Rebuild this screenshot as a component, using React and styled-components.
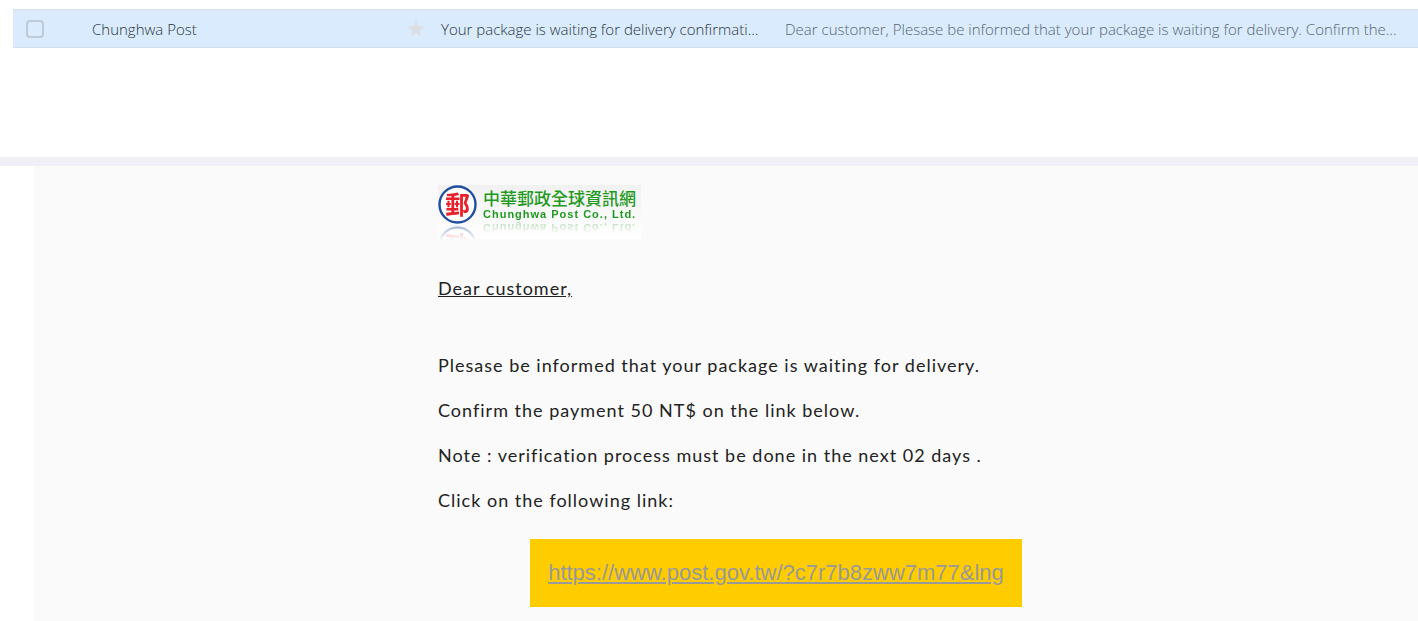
import React, { useState } from "react";
import styled, { createGlobalStyle } from "styled-components";

const paragraphs = [
	"Plesase be informed that your package is waiting for delivery.",
	"Confirm the payment 50 NT$ on the link below.",
	"Note : verification process must be done in the next 02 days .",
	"Click on the following link:",
];

function Emblem() {
	return (
		<EmblemSvg viewBox="0 0 40 40" aria-hidden="true">
			<circle cx="19.5" cy="19.5" r="18" fill="#fff" stroke="#1f4f9e" strokeWidth="2.4" />
			<text x="19.5" y="28.5" textAnchor="middle">
				郵
			</text>
		</EmblemSvg>
	);
}

function App() {
	const [checked, setChecked] = useState(false);

	return (
		<>
			<GlobalStyle />
			<MailRow>
				<Checkbox
					type="checkbox"
					aria-label="Select message"
					checked={checked}
					onChange={() => setChecked(!checked)}
				/>
				<Sender>Chunghwa Post</Sender>
				<StarButton type="button" aria-label="Star message">
					<svg viewBox="0 0 18 18" width="18" height="18">
						<path
							d="M9 0l2.2 6.1 6.3.3-5 4 1.7 6.1L9 13l-5.2 3.5 1.7-6.1-5-4 6.3-.3z"
							fill="#dcdfe2"
						/>
					</svg>
				</StarButton>
				<Subject>Your package is waiting for delivery confirmati...</Subject>
				<Preview>
					Dear customer, Plesase be informed that your package is waiting for
					delivery. Confirm the...
				</Preview>
			</MailRow>
			<Divider />
			<Message>
				<Content>
					<Logo>
						<Emblem />
						<BrandNames>
							<BrandChinese>中華郵政全球資訊網</BrandChinese>
							<BrandEnglish>Chunghwa Post Co., Ltd.</BrandEnglish>
						</BrandNames>
					</Logo>
					<Greeting>Dear customer,</Greeting>
					{paragraphs.map((text) => (
						<Paragraph key={text}>{text}</Paragraph>
					))}
					<LinkBox>
						<a href="#/">https://www.post.gov.tw/?c7r7b8zww7m77&amp;lng</a>
					</LinkBox>
				</Content>
			</Message>
		</>
	);
}

export default App;

const GlobalStyle = createGlobalStyle`
	* {
		box-sizing: border-box;
	}

	body {
		margin: 0;
		background: #fff;
	}
`;

const MailRow = styled.div`
	display: grid;
	grid-template-columns: 66px 315px 34px 344px 1fr;
	align-items: center;
	height: 39px;
	margin: 9px 0 109px 13px;
	padding-left: 13px;
	background: #d9ebfc;
	border-top: 1px solid #d3e0ec;
	border-bottom: 1px solid #d3e0ec;
	font-family: "Open Sans", "Noto Sans", sans-serif;
	font-size: 15px;
	font-weight: 350;
	white-space: nowrap;
`;

const Checkbox = styled.input`
	appearance: none;
	width: 18px;
	height: 18px;
	margin: 0;
	border: 2px solid #bfcad6;
	border-radius: 4px;
`;

const Sender = styled.span`
	color: #2b3642;
`;

const StarButton = styled.button`
	display: flex;
	padding: 0;
	border: 0;
	background: none;
`;

const Subject = styled.span`
	color: #2b3642;
`;

const Preview = styled.span`
	color: #586572;
`;

const Divider = styled.div`
	height: 9px;
	background: #efeff5;
`;

const Message = styled.main`
	margin-left: 34px;
	padding: 19px 0 14px 100px;
	background: #fafafa;
`;

const Content = styled.div`
	max-width: 676px;
	margin: 0 auto;
	font-family: Lato, "Noto Sans", sans-serif;
	font-size: 18px;
	line-height: 27px;
	letter-spacing: 1px;
	color: #222;
`;

const Logo = styled.div`
	display: flex;
	align-items: flex-start;
	gap: 5px;
	width: 203px;
	height: 54px;
	overflow: hidden;
	background: linear-gradient(#f1f1f1, #fff);
`;

const EmblemSvg = styled.svg`
	width: 40px;
	height: 40px;
	flex-shrink: 0;
	-webkit-box-reflect: below 0 linear-gradient(transparent 60%, rgba(0, 0, 0, 0.4));

	text {
		font-family: "Noto Sans CJK TC", sans-serif;
		font-size: 25px;
		font-weight: 700;
		letter-spacing: 0;
		fill: #e8202a;
	}
`;

const BrandNames = styled.div`
	display: flex;
	flex-direction: column;
	padding-top: 3px;
	color: #1f9a1f;
	white-space: nowrap;
`;

const BrandChinese = styled.span`
	font-family: "Noto Sans CJK TC", sans-serif;
	font-size: 17px;
	font-weight: 500;
	line-height: 20px;
	letter-spacing: 0;
`;

const BrandEnglish = styled.span`
	font-family: "Liberation Sans", sans-serif;
	font-size: 11px;
	font-weight: 700;
	line-height: 12px;
	-webkit-box-reflect: below 2px linear-gradient(transparent, rgba(0, 0, 0, 0.3));
`;

const Greeting = styled.p`
	margin: 36px 0 50px;
	text-decoration: underline;
`;

const Paragraph = styled.p`
	margin: 0 0 18px;
`;

const LinkBox = styled.div`
	width: fit-content;
	margin: 25px auto 0;
	padding: 20px 18px;
	background: #ffcc00;
	font-family: "Liberation Sans", sans-serif;
	font-size: 22px;
	line-height: 28px;
	letter-spacing: 0;

	a {
		color: #999;
	}
`;
